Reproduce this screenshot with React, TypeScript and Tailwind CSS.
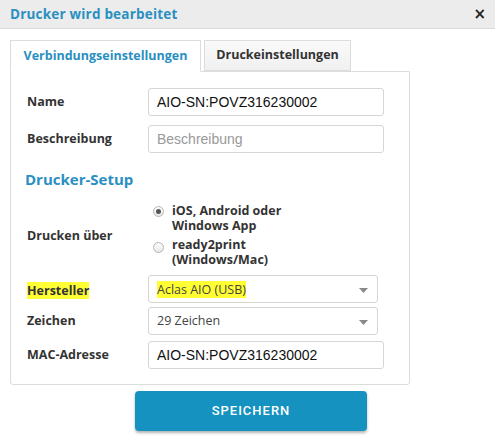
import React from 'react';

const labelFont = "font-['Open_Sans',sans-serif]";

const Caret: React.FC = () => (
  <svg width="9" height="5" viewBox="0 0 9 5" className="absolute right-[9px] top-[12px]">
    <path d="M0 0 L9 0 L4.5 5 Z" fill="#8a8a8a" />
  </svg>
);

const App: React.FC = () => {
  return (
    <div className="w-[495px] h-[437px] bg-white overflow-hidden">
      {/* Header */}
      <div className="h-[29px] bg-[#ececec] border-b border-[#dadada] flex items-center justify-between pl-[10px] pr-[9px]">
        <span className={`${labelFont} text-[13.5px] font-bold tracking-[0.2px] text-[#2a8fc2]`}>
          Drucker wird bearbeitet
        </span>
        <span className="font-['DejaVu_Sans',sans-serif] text-[15px] font-bold text-[#222] leading-none">×</span>
      </div>

      <div className="pt-[11px] px-[10px]">
        {/* Tabs */}
        <div className="flex gap-[3px] relative z-10">
          <div className={`${labelFont} w-[191px] h-[32px] border border-[#dcdcdc] border-b-white bg-white flex items-center justify-center text-[12.5px] font-bold text-[#2a8fc2]`}>
            Verbindungseinstellungen
          </div>
          <div className={`${labelFont} w-[147px] h-[31px] border border-[#dcdcdc] bg-gradient-to-b from-[#fafafa] to-[#f0f0f0] flex items-center justify-center text-[12.5px] font-bold text-[#333]`}>
            Druckeinstellungen
          </div>
        </div>

        {/* Panel */}
        <div className="w-[400px] h-[314px] -mt-px border border-[#dcdcdc] rounded-b-[3px] pt-[16px] pl-[16px]">
          <div className="flex items-center h-[28px]">
            <div className={`${labelFont} w-[121px] text-[12.5px] font-bold text-[#333]`}>Name</div>
            <div className="w-[236px] h-[28px] border border-[#d6d6d6] rounded-[3px] flex items-center px-[8px] font-['Liberation_Sans',sans-serif] text-[14px] text-[#111]">
              AIO-SN:POVZ316230002
            </div>
          </div>

          <div className="flex items-center h-[28px] mt-[9px]">
            <div className={`${labelFont} w-[121px] text-[12.5px] font-bold text-[#333]`}>Beschreibung</div>
            <div className="w-[236px] h-[28px] border border-[#d6d6d6] rounded-[3px] flex items-center px-[8px] font-['Liberation_Sans',sans-serif] text-[14px] text-[#999]">
              Beschreibung
            </div>
          </div>

          <div className={`${labelFont} text-[15px] font-bold text-[#2a8fc2] mt-[15px] -ml-[2px] h-[22px] flex items-center`}>
            Drucker-Setup
          </div>

          <div className="flex items-center mt-[12px] h-[66px]">
            <div className={`${labelFont} w-[121px] text-[12.5px] font-bold text-[#333] pt-[3px]`}>Drucken über</div>
            <div className="flex flex-col gap-[4px] pl-[5px]">
              <div className="flex items-start gap-[8px]">
                <span className="mt-[3px] w-[11px] h-[11px] rounded-full border border-[#b5b5b5] bg-gradient-to-b from-[#fdfdfd] to-[#e8e8e8] flex items-center justify-center">
                  <span className="w-[5px] h-[5px] rounded-full bg-[#555]" />
                </span>
                <span className={`${labelFont} text-[12.5px] font-bold text-[#333] leading-[15px]`}>
                  iOS, Android oder<br />Windows App
                </span>
              </div>
              <div className="flex items-start gap-[8px]">
                <span className="mt-[5px] w-[11px] h-[11px] rounded-full border border-[#b5b5b5] bg-gradient-to-b from-[#fdfdfd] to-[#e8e8e8]" />
                <span className={`${labelFont} text-[12.5px] font-bold text-[#333] leading-[15px]`}>
                  ready2print<br />(Windows/Mac)
                </span>
              </div>
            </div>
          </div>

          <div className="flex items-center h-[28px] mt-[7px]">
            <div className="w-[121px]">
              <span className={`${labelFont} text-[12.5px] font-bold text-[#333] bg-[#ffff33] leading-[17px] inline-block`}>Hersteller</span>
            </div>
            <div className="relative w-[230px] h-[28px] border border-[#d6d6d6] rounded-[3px] flex items-center px-[8px]">
              <span className={`${labelFont} text-[12.5px] text-[#444] bg-[#ffff33] leading-[17px]`}>Aclas AIO (USB)</span>
              <Caret />
            </div>
          </div>

          <div className="flex items-center h-[28px] mt-[4px]">
            <div className={`${labelFont} w-[121px] text-[12.5px] font-bold text-[#333]`}>Zeichen</div>
            <div className="relative w-[230px] h-[28px] border border-[#d6d6d6] rounded-[3px] flex items-center px-[8px]">
              <span className={`${labelFont} text-[12.5px] text-[#444]`}>29 Zeichen</span>
              <Caret />
            </div>
          </div>

          <div className="flex items-center h-[28px] mt-[6px]">
            <div className={`${labelFont} w-[121px] text-[12.5px] font-bold text-[#333]`}>MAC-Adresse</div>
            <div className="w-[236px] h-[28px] border border-[#d6d6d6] rounded-[3px] flex items-center px-[8px] font-['Liberation_Sans',sans-serif] text-[14px] text-[#111]">
              AIO-SN:POVZ316230002
            </div>
          </div>
        </div>

        {/* Save button */}
        <div className="flex justify-center pt-[6px] pl-[7px]">
          <button className="w-[232px] h-[40px] rounded-[4px] bg-[#1592bf] shadow-[0_2px_3px_rgba(0,0,0,0.3)] font-['Roboto',sans-serif] text-[13px] font-medium tracking-[1px] text-white">
            SPEICHERN
          </button>
        </div>
      </div>
    </div>
  );
};

export default App;
